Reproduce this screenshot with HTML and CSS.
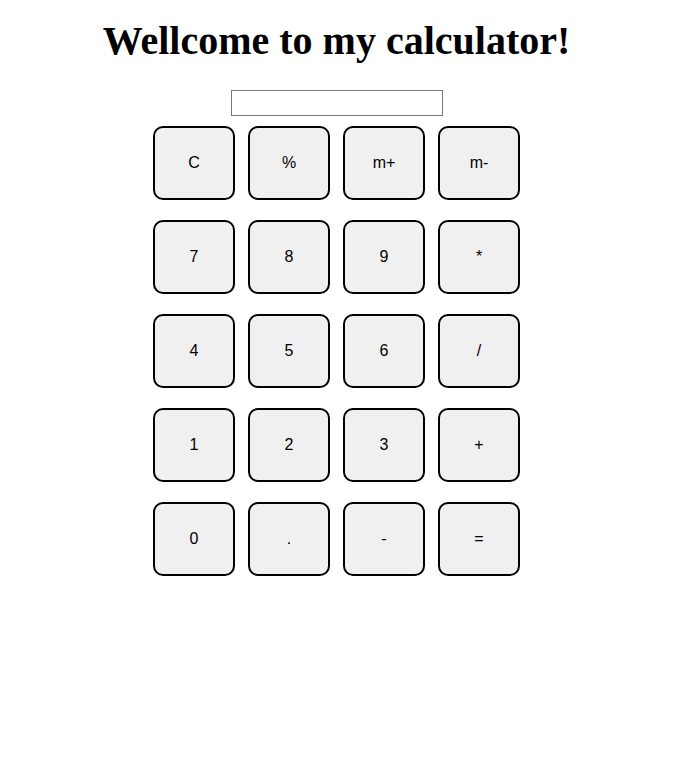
FILE: index.html
```html
<!DOCTYPE html>
<html>
<head>
<meta charset="utf-8">
<link rel="stylesheet" href="styles.css">
</head>
<body>
<div class="page">
  <h1 class="title">Wellcome to my calculator!</h1>
  <div class="display-row"><input class="display" type="text"></div>
  <div class="keys">
    <button class="key">C</button>
    <button class="key">%</button>
    <button class="key">m+</button>
    <button class="key">m-</button>
    <button class="key">7</button>
    <button class="key">8</button>
    <button class="key">9</button>
    <button class="key">*</button>
    <button class="key">4</button>
    <button class="key">5</button>
    <button class="key">6</button>
    <button class="key">/</button>
    <button class="key">1</button>
    <button class="key">2</button>
    <button class="key">3</button>
    <button class="key">+</button>
    <button class="key">0</button>
    <button class="key">.</button>
    <button class="key">-</button>
    <button class="key">=</button>
  </div>
</div>
</body>
</html>
```
FILE: styles.css
```css
html, body {
  margin: 0;
  padding: 0;
  background: #fff;
}
.page {
  width: 657px;
  margin-left: 8px;
  padding-top: 1px;
  font-family: "Liberation Serif", "Times New Roman", serif;
}
.title {
  font-size: 40px;
  font-weight: bold;
  text-align: center;
  margin: 17px 0 26px;
  line-height: 46px;
}
.display-row {
  display: flex;
  justify-content: center;
}
.display {
  box-sizing: border-box;
  width: 212px;
  height: 26px;
  border: 1px solid #767676;
  padding: 1px 2px;
  margin: 0;
  background: #fff;
}
.keys {
  display: grid;
  grid-template-columns: repeat(4, 82px);
  grid-auto-rows: 74px;
  column-gap: 13px;
  row-gap: 20px;
  justify-content: center;
  margin-top: 10px;
}
.key {
  box-sizing: border-box;
  border: 2px solid #000;
  border-radius: 10px;
  background: #f0f0f0;
  font-family: "Liberation Sans", Arial, sans-serif;
  font-size: 16px;
  color: #000;
  padding: 0;
  margin: 0;
}
```
